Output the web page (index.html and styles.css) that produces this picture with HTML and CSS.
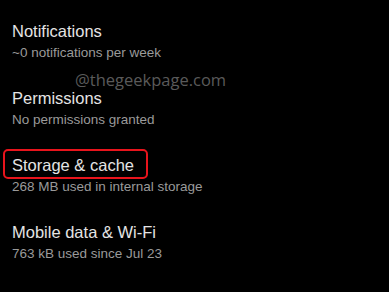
FILE: index.html
```html
<!DOCTYPE html>
<html lang="en">
<head>
    <meta charset="UTF-8">
    <meta name="viewport" content="width=device-width, initial-scale=1.0">
    <title>App info</title>
    <link rel="stylesheet" href="styles.css">
</head>
<body>
    <div class="list">
        <div class="item">
            <div class="item-title">Notifications</div>
            <div class="item-sub">~0 notifications per week</div>
        </div>
        <div class="item">
            <div class="item-title">Permissions</div>
            <div class="item-sub">No permissions granted</div>
        </div>
        <div class="item">
            <div class="item-title"><span class="highlight">Storage &amp; cache</span></div>
            <div class="item-sub">268 MB used in internal storage</div>
        </div>
        <div class="item">
            <div class="item-title">Mobile data &amp; Wi-Fi</div>
            <div class="item-sub">763 kB used since Jul 23</div>
        </div>
        <div class="watermark">@thegeekpage.com</div>
    </div>
</body>
</html>
```

FILE: styles.css
```css
body {
    margin: 0;
    background-color: #000;
    font-family: "Liberation Sans", Arial, sans-serif;
}
.list {
    position: relative;
    padding-top: 21px;
    height: 271px;
}
.item {
    padding-left: 12px;
    height: 67px;
}
.item-title {
    color: #e4e4e4;
    font-size: 16.5px;
    line-height: 20px;
}
.item-sub {
    color: #9a9a9a;
    font-size: 13.5px;
    line-height: 21px;
    padding-top: 1px;
}
.highlight {
    position: relative;
}
.highlight::after {
    content: "";
    position: absolute;
    left: -9px;
    right: -14px;
    top: -7px;
    bottom: -5px;
    border: 2px solid #e8141c;
    border-radius: 5px;
}
.watermark {
    position: absolute;
    left: 75px;
    top: 68px;
    color: #5a5a5a;
    font-family: "Open Sans", sans-serif;
    font-size: 16.5px;
}
```
